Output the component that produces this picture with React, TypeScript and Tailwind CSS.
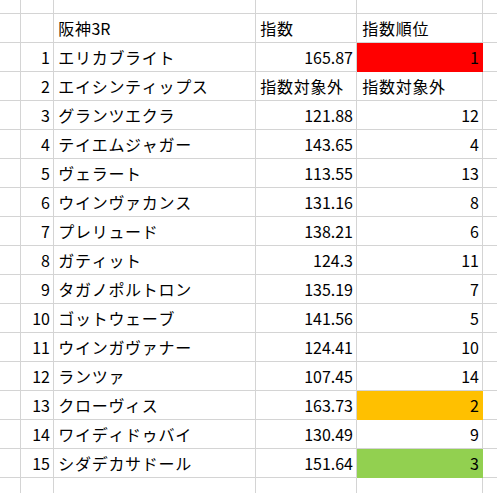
import React from "react";

type Row = { n: number; name: string; idx: string; rank: string; fill?: string };

const rows: Row[] = [
  { n: 1, name: "エリカブライト", idx: "165.87", rank: "1", fill: "red" },
  { n: 2, name: "エイシンティップス", idx: "指数対象外", rank: "指数対象外" },
  { n: 3, name: "グランツエクラ", idx: "121.88", rank: "12" },
  { n: 4, name: "テイエムジャガー", idx: "143.65", rank: "4" },
  { n: 5, name: "ヴェラート", idx: "113.55", rank: "13" },
  { n: 6, name: "ウインヴァカンス", idx: "131.16", rank: "8" },
  { n: 7, name: "プレリュード", idx: "138.21", rank: "6" },
  { n: 8, name: "ガティット", idx: "124.3", rank: "11" },
  { n: 9, name: "タガノポルトロン", idx: "135.19", rank: "7" },
  { n: 10, name: "ゴットウェーブ", idx: "141.56", rank: "5" },
  { n: 11, name: "ウインガヴァナー", idx: "124.41", rank: "10" },
  { n: 12, name: "ランツァ", idx: "107.45", rank: "14" },
  { n: 13, name: "クローヴィス", idx: "163.73", rank: "2", fill: "orange" },
  { n: 14, name: "ワイディドゥバイ", idx: "130.49", rank: "9" },
  { n: 15, name: "シダデカサドール", idx: "151.64", rank: "3", fill: "green" },
];

const cell = "border-r border-b border-[#d4d4d4] flex items-center whitespace-nowrap overflow-hidden";

function rankClass(fill?: string) {
  if (fill === "red") return "bg-[#ff0000] border-r-[#ff0000] border-b-[#ff0000]";
  if (fill === "orange") return "bg-[#ffc000] border-r-[#ffc000] border-b-[#ffc000]";
  if (fill === "green") return "bg-[#92d050] border-r-[#92d050] border-b-[#92d050]";
  return "";
}

function FW({ text }: { text: string }) {
  return (
    <span className="inline-flex items-center">
      {Array.from(text).map((ch, i) =>
        ch.charCodeAt(0) > 0x2000 ? (
          <span key={i} className="inline-block w-[16.7px] text-center">
            {ch}
          </span>
        ) : (
          <span key={i}>{ch}</span>
        )
      )}
    </span>
  );
}

export default function App() {
  const isNum = (s: string) => /^[0-9.]+$/.test(s);
  return (
    <div className="w-[497px] h-[493px] overflow-hidden bg-white text-black text-[16px] leading-none font-['Noto_Sans_CJK_JP','Noto_Sans',sans-serif]">
      <div className="grid grid-cols-[21px_33px_202px_101px_126px_1fr]">
        {/* top partial row */}
        <div className={`${cell} h-[14px]`} />
        <div className={`${cell} h-[14px]`} />
        <div className={`${cell} h-[14px]`} />
        <div className={`${cell} h-[14px]`} />
        <div className={`${cell} h-[14px]`} />
        <div className={`${cell} h-[14px] border-r-0`} />
        {/* header */}
        <div className={`${cell} h-[29px]`} />
        <div className={`${cell} h-[29px]`} />
        <div className={`${cell} h-[29px] pl-[4px]`}><FW text="阪神3R" /></div>
        <div className={`${cell} h-[29px] pl-[4px]`}><FW text="指数" /></div>
        <div className={`${cell} h-[29px] pl-[5px]`}><FW text="指数順位" /></div>
        <div className={`${cell} h-[29px] border-r-0`} />
        {rows.map((r) => (
          <React.Fragment key={r.n}>
            <div className={`${cell} h-[29px]`} />
            <div className={`${cell} h-[29px] justify-end pr-[3px]`}>{r.n}</div>
            <div className={`${cell} h-[29px] pl-[4px]`}><FW text={r.name} /></div>
            <div className={`${cell} h-[29px] ${isNum(r.idx) ? "justify-end pr-[3px]" : "pl-[4px]"}`}>
              {isNum(r.idx) ? r.idx : <FW text={r.idx} />}
            </div>
            <div className={`${cell} h-[29px] ${isNum(r.rank) ? "justify-end pr-[3px]" : "pl-[5px]"} ${rankClass(r.fill)}`}>
              {isNum(r.rank) ? r.rank : <FW text={r.rank} />}
            </div>
            <div className={`${cell} h-[29px] border-r-0`} />
          </React.Fragment>
        ))}
        {/* bottom partial row */}
        <div className={`${cell} h-[16px] border-b-0`} />
        <div className={`${cell} h-[16px] border-b-0`} />
        <div className={`${cell} h-[16px] border-b-0`} />
        <div className={`${cell} h-[16px] border-b-0`} />
        <div className={`${cell} h-[16px] border-b-0`} />
        <div className={`${cell} h-[16px] border-b-0 border-r-0`} />
      </div>
    </div>
  );
}
